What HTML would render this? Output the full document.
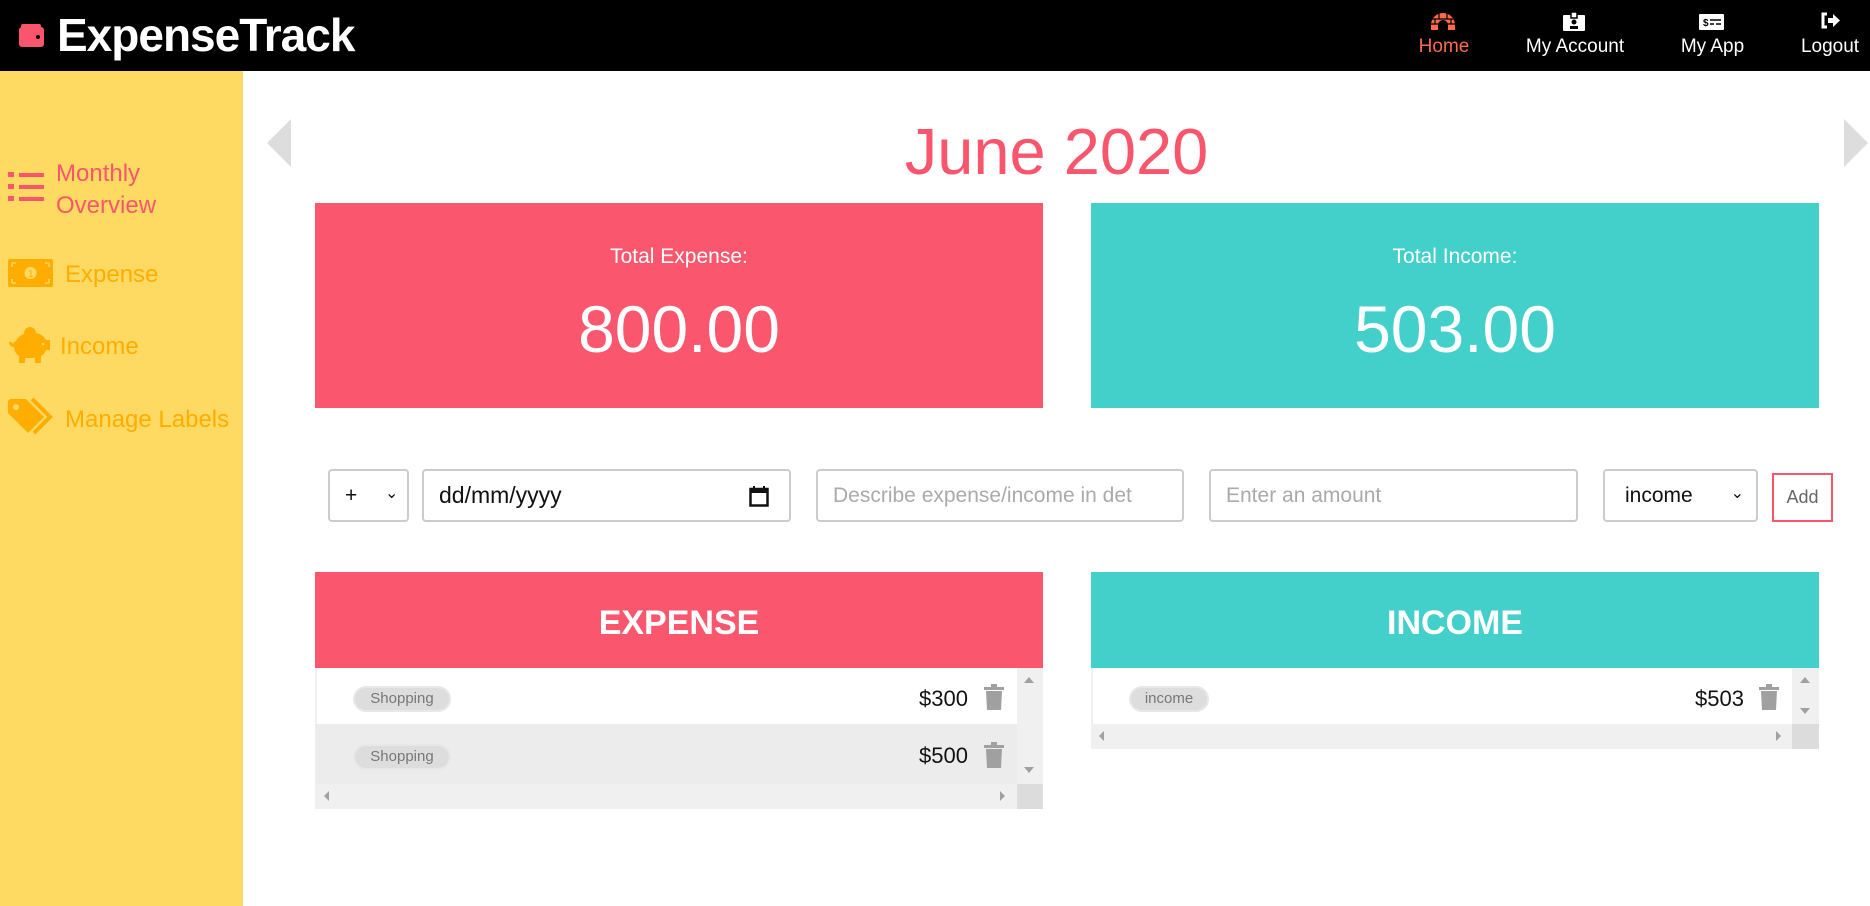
<!DOCTYPE html>
<html><head><meta charset="utf-8"><style>
*{box-sizing:border-box;margin:0;padding:0}
body{width:1870px;height:906px;position:relative;overflow:hidden;background:#fff;font-family:"Liberation Sans",sans-serif}
.a{position:absolute}
.nav{left:0;top:0;width:1870px;height:71px;background:#000}
.side{left:0;top:71px;width:243px;height:835px;background:#ffda63}
.nt{color:#fff;font-size:19px;text-align:center;top:36px}
.card{color:#fff;text-align:center}
.inp{border:2px solid #ccc;border-radius:4px;height:53px;top:469px;font-size:21px;color:#aaa;padding-left:15px;line-height:49px;background:#fff}
.th{color:#fff;font-weight:bold;font-size:34px;text-align:center;line-height:102px;height:96px;top:572px}
.pill{background:#ddd;border:2px solid #e8e8e8;border-radius:14px;color:#777;font-size:15px;text-align:center;line-height:22px;height:26px}
.amt{font-size:22px;color:#111;text-align:right}
</style></head><body>
<div class="a nav"></div>
<svg class="a" style="left:19px;top:24px" width="26" height="24" viewBox="0 0 26 24"><rect x="2" y="0" width="20" height="5" rx="2" fill="#f9566e"/><rect x="0" y="3" width="25" height="20" rx="3" fill="#f9566e"/><circle cx="19" cy="13" r="2" fill="#000"/></svg>
<div class="a" style="left:57px;top:8px;color:#fff;font-weight:bold;font-size:46px;letter-spacing:-1px">ExpenseTrack</div>

<svg class="a" style="left:1431px;top:13px" width="24" height="17" viewBox="0 0 24 17"><path d="M12 0A12 12 0 0 0 0 12v5h7v-5a5 5 0 0 1 10 0v5h7v-5A12 12 0 0 0 12 0z" fill="#fa6b4c"/><path d="M0 6h24M0 11h24M8 0v6M16 0v6M4 6v5M20 6v5" stroke="#000" stroke-width="1.2"/></svg>
<div class="a nt" style="left:1400px;width:88px;color:#fa6b4c">Home</div>
<svg class="a" style="left:1563px;top:12px" width="22" height="19" viewBox="0 0 22 19"><rect x="0" y="3" width="22" height="16" rx="1" fill="#fff"/><rect x="8" y="0" width="6" height="6" fill="#fff" stroke="#000" stroke-width="1.5"/><circle cx="11" cy="10" r="2.5" fill="#000"/><rect x="7" y="14" width="8" height="3" fill="#000"/></svg>
<div class="a nt" style="left:1515px;width:120px">My Account</div>
<svg class="a" style="left:1699px;top:14px" width="25" height="16" viewBox="0 0 25 16"><rect width="25" height="16" rx="1" fill="#fff"/><text x="4" y="12" font-size="10" font-weight="bold" fill="#000" font-family="Liberation Sans">$</text><path d="M11 6h11M11 10h4M17 10h5" stroke="#000" stroke-width="1.5"/></svg>
<div class="a nt" style="left:1660px;width:105px">My App</div>
<svg class="a" style="left:1820px;top:12px" width="20" height="17" viewBox="0 0 20 17"><path d="M7 2H3v13h4" stroke="#fff" stroke-width="3" fill="none"/><path d="M8 6h5V2l7 6.5-7 6.5v-4H8z" fill="#fff"/></svg>
<div class="a nt" style="left:1790px;width:80px">Logout</div>

<div class="a side"></div>
<svg class="a" style="left:8px;top:172px" width="36" height="30" viewBox="0 0 36 30"><g fill="#f9566e"><rect x="0" y="0" width="6" height="5"/><rect x="0" y="12" width="6" height="5"/><rect x="0" y="24" width="6" height="5"/><rect x="11" y="1" width="25" height="4"/><rect x="11" y="13" width="25" height="4"/><rect x="11" y="25" width="25" height="4"/></g></svg>
<div class="a" style="left:56px;top:158px;font-size:24px;line-height:32px;color:#f9566e">Monthly<br>Overview</div>
<svg class="a" style="left:8px;top:259px" width="45" height="28" viewBox="0 0 45 28"><rect width="45" height="28" rx="2" fill="#ffad00"/><circle cx="22.5" cy="14" r="6" fill="#ffda63"/><text x="20" y="18" font-size="10" fill="#ffad00" font-family="Liberation Sans">1</text><path d="M4 4h4M4 4v4M41 4h-4M41 4v4M4 24h4M4 24v-4M41 24h-4M41 24v-4" stroke="#ffda63" stroke-width="1.5"/></svg>
<div class="a" style="left:65px;top:261px;font-size:24px;color:#ffad00">Expense</div>
<svg class="a" style="left:8px;top:327px" width="43" height="36" viewBox="0 0 43 36"><path d="M8 14c3-7 12-9 20-8 6 1 8 4 10 7h4v10h-4c-1 3-3 5-5 6v7h-6v-5h-10v5h-6v-7c-4-3-5-6-5-9-3 0-5-2-5-5h3c0 2 2 2 2 0z" fill="#ffad00"/><circle cx="22" cy="6" r="6" fill="#ffad00"/><circle cx="35" cy="17" r="1.3" fill="#ffda63"/></svg>
<div class="a" style="left:60px;top:333px;font-size:24px;color:#ffad00">Income</div>
<svg class="a" style="left:8px;top:398px" width="46" height="38" viewBox="0 0 46 38"><path d="M0 3v12l20 20 16-16L18 1H2z" fill="#ffad00"/><circle cx="8" cy="9" r="3" fill="#ffda63"/><path d="M24 1l18 18-16 16" stroke="#ffad00" stroke-width="4" fill="none"/></svg>
<div class="a" style="left:65px;top:406px;font-size:24px;color:#ffad00">Manage Labels</div>

<svg class="a" style="left:267px;top:119px" width="24" height="48"><path d="M24 0v48L0 24z" fill="#ddd"/></svg>
<svg class="a" style="left:1844px;top:119px" width="24" height="48"><path d="M0 0v48L24 24z" fill="#ddd"/></svg>
<div class="a" style="left:243px;width:1627px;top:114px;text-align:center;font-size:65px;color:#f9566e">June 2020</div>

<div class="a card" style="left:315px;top:203px;width:728px;height:205px;background:#fa566e"><div style="margin-top:42px;font-size:21px">Total Expense:</div><div style="font-size:66px;margin-top:22px">800.00</div></div>
<div class="a card" style="left:1091px;top:203px;width:728px;height:205px;background:#43d0cb"><div style="margin-top:42px;font-size:21px">Total Income:</div><div style="font-size:66px;margin-top:22px">503.00</div></div>

<div class="a inp" style="left:328px;width:81px;color:#111">+<span style="position:absolute;left:55px;top:-2px;font-size:16px">&#8964;</span></div>
<div class="a inp" style="left:422px;width:369px;color:#111;font-size:23px">dd/mm/yyyy
<svg style="position:absolute;right:20px;top:14px" width="20" height="22" viewBox="0 0 20 22"><rect x="1.5" y="4" width="17" height="16.5" fill="none" stroke="#111" stroke-width="2.5"/><rect x="1" y="4" width="18" height="4" fill="#111"/><path d="M5 1v4M15 1v4" stroke="#111" stroke-width="2"/></svg></div>
<div class="a inp" style="left:816px;width:368px;overflow:hidden;white-space:nowrap">Describe expense/income in det</div>
<div class="a inp" style="left:1209px;width:369px">Enter an amount</div>
<div class="a inp" style="left:1603px;width:155px;color:#111;padding-left:20px">income<span style="position:absolute;right:12px;top:-2px;font-size:16px">&#8964;</span></div>
<div class="a" style="left:1772px;top:473px;width:61px;height:49px;border:2px solid #f9566e;color:#666;font-size:18px;text-align:center;line-height:45px">Add</div>

<div class="a th" style="left:315px;width:728px;background:#fa566e">EXPENSE</div>
<div class="a" style="left:315px;top:668px;width:728px;height:141px;background:#f0f0f0"></div>
<div class="a" style="left:317px;top:668px;width:700px;height:56px;background:#fff"></div>
<div class="a" style="left:315px;top:724px;width:702px;height:60px;background:#ececec"></div>
<div class="a pill" style="left:353px;top:686px;width:98px">Shopping</div>
<div class="a pill" style="left:353px;top:744px;width:98px">Shopping</div>
<div class="a amt" style="left:868px;width:100px;top:686px">$300</div>
<div class="a amt" style="left:868px;width:100px;top:743px">$500</div>
<svg class="a" style="left:984px;top:684px" width="20" height="26" viewBox="0 0 20 26"><path d="M0 3h20v3H0zM7 0h6v3H7zM2 7h16l-1 19H3z" fill="#a0a0a0"/></svg>
<svg class="a" style="left:984px;top:742px" width="20" height="26" viewBox="0 0 20 26"><path d="M0 3h20v3H0zM7 0h6v3H7zM2 7h16l-1 19H3z" fill="#a0a0a0"/></svg>
<div class="a" style="left:1017px;top:784px;width:26px;height:25px;background:#dcdcdc"></div>
<svg class="a" style="left:1024px;top:676px" width="12" height="8"><path d="M0 7h10L5 1z" fill="#a0a0a0"/></svg>
<svg class="a" style="left:1024px;top:766px" width="12" height="8"><path d="M0 1h10L5 7z" fill="#a0a0a0"/></svg>
<svg class="a" style="left:323px;top:791px" width="8" height="12"><path d="M6 0v10L1 5z" fill="#a0a0a0"/></svg>
<svg class="a" style="left:999px;top:791px" width="8" height="12"><path d="M1 0v10L6 5z" fill="#a0a0a0"/></svg>

<div class="a th" style="left:1091px;width:728px;background:#43d0cb">INCOME</div>
<div class="a" style="left:1091px;top:668px;width:728px;height:81px;background:#f0f0f0"></div>
<div class="a" style="left:1093px;top:668px;width:699px;height:56px;background:#fff"></div>
<div class="a pill" style="left:1129px;top:686px;width:80px">income</div>
<div class="a amt" style="left:1644px;width:100px;top:686px">$503</div>
<svg class="a" style="left:1759px;top:684px" width="20" height="26" viewBox="0 0 20 26"><path d="M0 3h20v3H0zM7 0h6v3H7zM2 7h16l-1 19H3z" fill="#a0a0a0"/></svg>
<div class="a" style="left:1792px;top:724px;width:27px;height:25px;background:#dcdcdc"></div>
<svg class="a" style="left:1800px;top:676px" width="12" height="8"><path d="M0 7h10L5 1z" fill="#a0a0a0"/></svg>
<svg class="a" style="left:1800px;top:707px" width="12" height="8"><path d="M0 1h10L5 7z" fill="#a0a0a0"/></svg>
<svg class="a" style="left:1098px;top:731px" width="8" height="12"><path d="M6 0v10L1 5z" fill="#a0a0a0"/></svg>
<svg class="a" style="left:1775px;top:731px" width="8" height="12"><path d="M1 0v10L6 5z" fill="#a0a0a0"/></svg>
</body></html>
